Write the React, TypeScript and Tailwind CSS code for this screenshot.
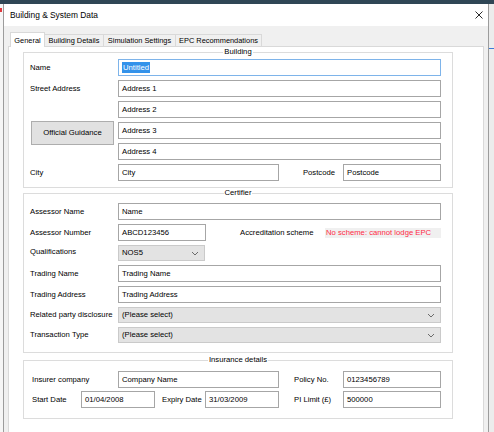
import type { ReactNode } from 'react';

function TextBox({
  value,
  className = '',
  focused = false,
}: {
  value: string;
  className?: string;
  focused?: boolean;
}) {
  return (
    <div
      className={`flex h-full items-center bg-white pl-[3px] whitespace-nowrap ${
        focused ? 'border border-[#7eb4ea]' : 'border border-[#a6a6a6]'
      } ${className}`}
    >
      {focused ? <span className="bg-[#3392ea] px-px text-white">{value}</span> : value}
    </div>
  );
}

function Select({ value, className = '' }: { value: string; className?: string }) {
  return (
    <div
      className={`flex h-[16px] items-center justify-between border border-[#cacaca] bg-[#e3e3e3] pl-[3px] pr-[5px] whitespace-nowrap ${className}`}
    >
      <span>{value}</span>
      <svg width="8" height="5" viewBox="0 0 8 5" fill="none">
        <path d="M1 1 L4 4 L7 1" stroke="#6b6b6b" strokeWidth="1" />
      </svg>
    </div>
  );
}

function Label({ children, className = '' }: { children: ReactNode; className?: string }) {
  return <div className={`flex items-center whitespace-nowrap ${className}`}>{children}</div>;
}

function Group({
  title,
  className = '',
  children,
}: {
  title: string;
  className?: string;
  children: ReactNode;
}) {
  return (
    <fieldset className={`w-[430px] border border-[#dcdcdc] ${className}`}>
      <legend className="mx-auto px-px leading-[10px]">{title}</legend>
      {children}
    </fieldset>
  );
}

const tabs = ['General', 'Building Details', 'Simulation Settings', 'EPC Recommendations'];
const tabWidths = ['w-[35px]', 'w-[59px]', 'w-[72px]', 'w-[86px]'];

export default function App() {
  return (
    <div className="flex h-[432px] w-[494px] flex-col overflow-hidden bg-white font-['Liberation_Sans',Arial,sans-serif] text-[7.7px] text-black">
      <div className="h-[4px] shrink-0 bg-[#2f4655]" />
      <div className="flex flex-1">
        {/* background window on the left */}
        <div className="w-[3px] bg-[#f6f6f6]">
          <div className="mt-[4px] h-[4px] w-[2px] bg-[#e0393e]" />
        </div>

        {/* dialog */}
        <div className="flex w-[486px] flex-col border-x border-[#9c9c9c] bg-[#f0f0f0]">
          <div className="flex h-[22px] items-center justify-between bg-white pl-[6px] pr-[5px]">
            <span className="text-[8.4px]">Building &amp; System Data</span>
            <svg width="8" height="8" viewBox="0 0 8 8">
              <path d="M0.5 0.5 L7.5 7.5 M7.5 0.5 L0.5 7.5" stroke="#2b2b2b" strokeWidth="1" />
            </svg>
          </div>

          <div className="flex flex-1 flex-col px-[4px]">
            {/* tab strip */}
            <div className="mt-[6px] flex h-[14px] items-end pl-[2px] text-[7.4px]">
              {tabs.map((t, i) =>
                i === 0 ? (
                  <div
                    key={t}
                    className={`relative z-10 -mb-px flex h-[15px] items-start justify-center border-x border-t border-[#d9d9d9] bg-white pt-[2px] ${tabWidths[i]}`}
                  >
                    {t}
                  </div>
                ) : (
                  <div
                    key={t}
                    className={`flex h-[12px] items-center justify-center border-r border-t border-[#d9d9d9] bg-[#f0f0f0] ${tabWidths[i]}`}
                  >
                    {t}
                  </div>
                ),
              )}
            </div>

            {/* tab page */}
            <div className="flex flex-1 flex-col border border-b-0 border-[#d9d9d9] bg-white pl-[14px]">
              <Group title="Building">
                <div className="grid grid-cols-[88px_323px] auto-rows-[17px] gap-y-[4px] pb-[6px] pl-[6px] pt-[2px]">
                  <Label>Name</Label>
                  <TextBox value="Untitled" focused />
                  <Label>Street Address</Label>
                  <TextBox value="Address 1" />
                  <div />
                  <TextBox value="Address 2" />
                  <div className="row-span-2 self-start">
                    <button className="-mt-px ml-px flex h-[24px] w-[83px] items-center justify-center border border-[#adadad] bg-[#e1e1e1]">
                      Official Guidance
                    </button>
                  </div>
                  <TextBox value="Address 3" />
                  <TextBox value="Address 4" />
                  <Label>City</Label>
                  <div className="flex">
                    <TextBox value="City" className="w-[161px]" />
                    <Label className="flex-1 justify-end pr-[8px]">Postcode</Label>
                    <TextBox value="Postcode" className="w-[98px]" />
                  </div>
                </div>
              </Group>

              <Group title="Certifier">
                <div className="grid grid-cols-[88px_323px] grid-rows-[17px_17px_16px_17px_17px_16px_16px] gap-y-[4px] pb-[9px] pl-[6px] pt-[5px]">
                  <Label>Assessor Name</Label>
                  <TextBox value="Name" />
                  <Label>Assessor Number</Label>
                  <div className="flex">
                    <TextBox value="ABCD123456" className="w-[88px]" />
                    <Label className="w-[119px] pl-[34px]">Accreditation scheme</Label>
                    <div className="flex h-[10px] flex-1 items-center self-center bg-[#f0f0f0] pl-px text-[#ff2a44]">
                      No scheme: cannot lodge EPC
                    </div>
                  </div>
                  <Label className="-mt-[2px]">Qualifications</Label>
                  <Select value="NOS5" className="w-[87px]" />
                  <Label>Trading Name</Label>
                  <TextBox value="Trading Name" />
                  <Label>Trading Address</Label>
                  <TextBox value="Trading Address" />
                  <Label>Related party disclosure</Label>
                  <Select value="(Please select)" />
                  <Label>Transaction Type</Label>
                  <Select value="(Please select)" />
                </div>
              </Group>

              <Group title="Insurance details" className="mt-[2px]">
                <div className="flex flex-col gap-[3px] pb-[10px] pl-[8px] pt-[6px]">
                  <div className="flex h-[17px]">
                    <Label className="w-[86px]">Insurer company</Label>
                    <TextBox value="Company Name" className="w-[161px]" />
                    <Label className="w-[64px] pl-[15px]">Policy No.</Label>
                    <TextBox value="0123456789" className="w-[98px]" />
                  </div>
                  <div className="flex h-[17px]">
                    <Label className="w-[49px]">Start Date</Label>
                    <TextBox value="01/04/2008" className="w-[74px]" />
                    <Label className="w-[50px] pl-[7px]">Expiry Date</Label>
                    <TextBox value="31/03/2009" className="w-[74px]" />
                    <Label className="w-[64px] pl-[15px]">PI Limit (£)</Label>
                    <TextBox value="500000" className="w-[98px]" />
                  </div>
                </div>
              </Group>
            </div>
          </div>
        </div>

        {/* background window on the right */}
        <div className="flex w-[5px] flex-col bg-[#ececec]">
          <div className="mt-[44px] h-px bg-[#3f7ad6]" />
        </div>
      </div>
    </div>
  );
}
